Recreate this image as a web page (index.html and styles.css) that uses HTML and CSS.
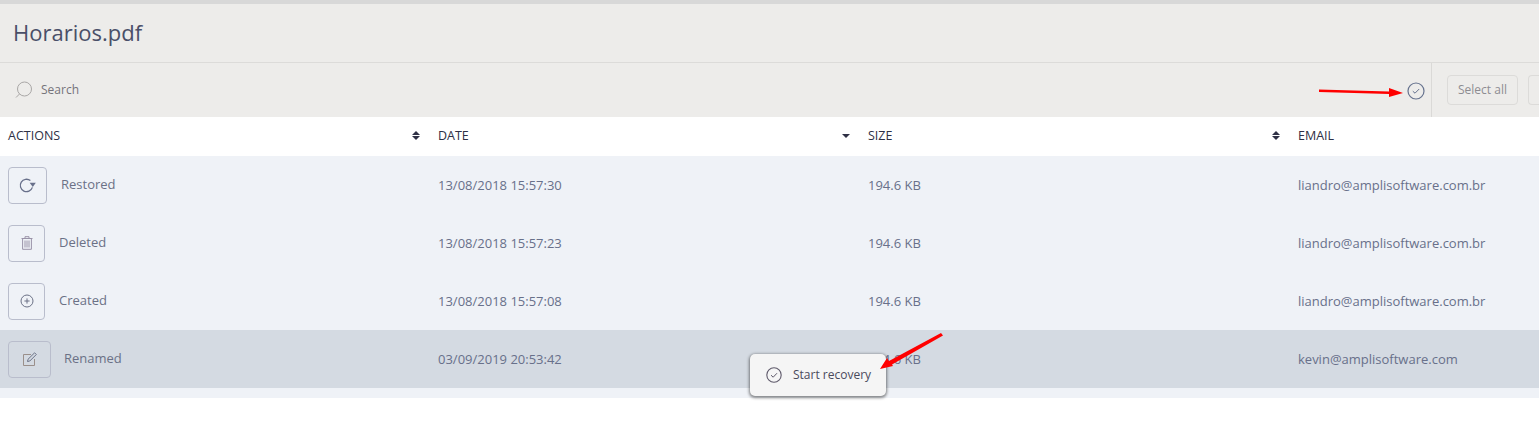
FILE: index.html
```html
<!DOCTYPE html>
<html lang="en">
<head>
<meta charset="utf-8">
<title>Horarios.pdf</title>
<link rel="stylesheet" href="styles.css">
</head>
<body>
<header class="title-bar"><h1>Horarios.pdf</h1></header>
<div class="toolbar">
  <div class="search">
    <svg class="search-icon" width="18" height="18" viewBox="0 0 18 18"><circle cx="9.5" cy="8" r="7" fill="none" stroke="#a9a7a6"/><path d="M4.5 13 1 16.5" fill="none" stroke="#a9a7a6"/></svg>
    <span>Search</span>
  </div>
  <svg class="check-toggle" width="18" height="18" viewBox="0 0 18 18"><circle cx="9" cy="9" r="8" fill="none" stroke="#66728e" stroke-width="1.2"/><path d="M5.8 9.2 8 11.2 12.2 7" fill="none" stroke="#66728e"/></svg>
  <div class="tool-actions">
    <button class="tool-btn">Select all</button>
    <button class="tool-btn tool-btn-cut"></button>
  </div>
</div>
<div class="table">
  <div class="row head">
    <div class="cell">ACTIONS<span class="sort"><i class="up"></i><i class="down"></i></span></div>
    <div class="cell">DATE<span class="sort"><i class="down"></i></span></div>
    <div class="cell">SIZE<span class="sort"><i class="up"></i><i class="down"></i></span></div>
    <div class="cell">EMAIL</div>
  </div>
  <div class="row">
    <div class="cell action">
      <span class="icon-box w39"><svg width="18" height="18" viewBox="0 0 18 18"><path d="M13.4 11.4A6.2 6.2 0 1 1 11.4 4.6" fill="none" stroke="#68708a" stroke-width="1.3"/><path d="M10.6 6.8h6.2l-3 4.2z" fill="#68708a"/></svg></span>
      <span class="label">Restored</span>
    </div>
    <div class="cell">13/08/2018 15:57:30</div>
    <div class="cell">194.6 KB</div>
    <div class="cell">liandro@amplisoftware.com.br</div>
  </div>
  <div class="row">
    <div class="cell action">
      <span class="icon-box w37"><svg width="12" height="14" viewBox="0 0 12 14"><path d="M.5 2.5h11M4 2.5V.7h4v1.8M1.6 2.5v10.8h8.8V2.5M4 4.5v7M6 4.5v7M8 4.5v7" fill="none" stroke="#9a93a8"/></svg></span>
      <span class="label">Deleted</span>
    </div>
    <div class="cell">13/08/2018 15:57:23</div>
    <div class="cell">194.6 KB</div>
    <div class="cell">liandro@amplisoftware.com.br</div>
  </div>
  <div class="row">
    <div class="cell action">
      <span class="icon-box w37"><svg width="14" height="14" viewBox="0 0 14 14"><circle cx="7" cy="7" r="6" fill="none" stroke="#6b7186"/><path d="M7 4.4v5.2M4.4 7h5.2" fill="none" stroke="#6b7186"/></svg></span>
      <span class="label">Created</span>
    </div>
    <div class="cell">13/08/2018 15:57:08</div>
    <div class="cell">194.6 KB</div>
    <div class="cell">liandro@amplisoftware.com.br</div>
  </div>
  <div class="row selected">
    <div class="cell action">
      <span class="icon-box w43"><svg width="14" height="14" viewBox="0 0 14 14"><path d="M8 2.5H.5v11h11V7" fill="none" stroke="#9a8f8a"/><path d="M4.5 9.5 5 7.3 11.6.8l1.7 1.7L6.8 9z" fill="none" stroke="#6b7186"/></svg></span>
      <span class="label">Renamed</span>
    </div>
    <div class="cell">03/09/2019 20:53:42</div>
    <div class="cell">194.6 KB</div>
    <div class="cell">kevin@amplisoftware.com</div>
  </div>
  <div class="table-end"></div>
</div>
<div class="menu">
  <svg width="16" height="16" viewBox="0 0 16 16"><circle cx="8" cy="8" r="7.2" fill="none" stroke="#5f5a6b" stroke-width="1.1"/><path d="M5 8.2 7.2 10.2 11 6.2" fill="none" stroke="#5f5a6b"/></svg>
  <span>Start recovery</span>
</div>
<svg class="arrows" width="1539" height="422" viewBox="0 0 1539 422">
  <path d="M1319 89.5 1389 91.5 1389 88 1403 93 1389 97 1389 94 1319 92z" fill="#f00"/>
  <path d="M941 333 943 335.5 892 364.5 893 366 880 369 887 358 889 361z" fill="#f00"/>
</svg>
</body>
</html>
```
FILE: styles.css
```css
* { box-sizing: border-box; }
html, body { margin: 0; height: 100%; }
body {
  background: #fff;
  font-family: "Open Sans", sans-serif;
  color: #68708a;
  overflow: hidden;
  position: relative;
}
.title-bar {
  height: 63px;
  background: #edecea;
  border-top: 4px solid #d8d8d8;
  border-bottom: 1px solid #dcdbd9;
  padding-left: 13px;
  display: flex;
  align-items: center;
}
.title-bar h1 {
  margin: 0 0 2px;
  font-size: 22px;
  font-weight: 400;
  color: #4a4f68;
}
.toolbar {
  height: 54px;
  background: #edecea;
  display: flex;
  align-items: center;
  padding-left: 15px;
}
.search {
  display: flex;
  align-items: center;
  gap: 8px;
  font-size: 12px;
  color: #75737a;
  flex: 1;
}
.search span { margin-bottom: 1px; }
.check-toggle { margin: 1px 6px 0 0; }
.tool-actions {
  height: 100%;
  border-left: 1px solid #dad9d7;
  padding-left: 15px;
  display: flex;
  align-items: center;
  gap: 10px;
  width: 108px;
  overflow: hidden;
  flex: none;
}
.tool-btn {
  flex: none;
  height: 30px;
  width: 71px;
  background: transparent;
  border: 1px solid #dcdbd9;
  border-radius: 4px;
  font: 12px "Open Sans", sans-serif;
  color: #8d8c92;
  padding: 0 0 2px;
}
.tool-btn-cut { width: 11px; border-right: 0; border-radius: 4px 0 0 4px; }
.row {
  display: grid;
  grid-template-columns: 430px 430px 430px 1fr;
  height: 58px;
  background: #eff2f7;
  font-size: 13px;
}
.head {
  height: 39px;
  background: #fff;
  color: #2e3045;
  font-size: 12.5px;
}
.selected { background: #d4dae2; }
.cell {
  display: flex;
  align-items: center;
  padding-left: 8px;
  position: relative;
}
.head .cell { padding-bottom: 2px; font-weight: 500; }
.sort {
  position: absolute;
  right: 10px;
  top: 13px;
  display: flex;
  flex-direction: column;
  height: 11px;
  justify-content: center;
  gap: 1px;
}
.sort i { display: block; width: 0; height: 0; border-left: 4px solid transparent; border-right: 4px solid transparent; }
.sort .up { border-bottom: 4px solid #2e3045; }
.sort .down { border-top: 4px solid #2e3045; }
.action { gap: 14px; }
.icon-box {
  flex: none;
  height: 37px;
  border: 1px solid #b9bdcc;
  border-radius: 4px;
  display: flex;
  align-items: center;
  justify-content: center;
}
.w39 { width: 39px; }
.w37 { width: 37px; }
.w43 { width: 43px; }
.w43 + .label { margin-left: -1px; }
.label { margin-top: -3px; color: #6b7186; }
.table-end { height: 10px; background: #eff2f7; }
.menu {
  position: absolute;
  left: 750px;
  top: 354px;
  width: 136px;
  height: 42px;
  background: #f5f5f5;
  border-radius: 5px;
  box-shadow: 0 1px 3px 1px rgba(0,0,0,.45);
  display: flex;
  align-items: center;
  gap: 11px;
  padding: 0 0 1px 16px;
  font-size: 12px;
  color: #4a4a5c;
}
.arrows { position: absolute; left: 0; top: 0; pointer-events: none; }
```
